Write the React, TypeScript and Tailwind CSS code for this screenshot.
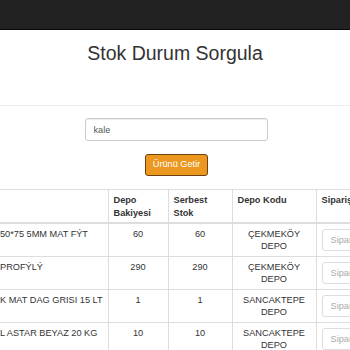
import { useState } from 'react';

const ROWS = [
  { name: '50*75 5MM MAT FÝT', bakiye: 60, serbest: 60, depo: ['ÇEKMEKÖY', 'DEPO'] },
  { name: 'PROFÝLÝ', bakiye: 290, serbest: 290, depo: ['ÇEKMEKÖY', 'DEPO'] },
  { name: 'K MAT DAG GRISI 15 LT', bakiye: 1, serbest: 1, depo: ['SANCAKTEPE', 'DEPO'] },
  { name: 'L ASTAR BEYAZ 20 KG', bakiye: 10, serbest: 10, depo: ['SANCAKTEPE', 'DEPO'] },
];

export default function App() {
  const [query, setQuery] = useState('kale');

  const th = "border border-[#ddd] border-b-2 px-[5px] pt-[4px] pb-[2px] text-left align-top font-bold leading-[13px]";
  const td = "border border-[#ddd] px-[5px] pt-[4px] pb-[4px] align-top leading-[12px]";

  return (
    <div className="w-[350px] h-[350px] overflow-hidden bg-white text-[#333] text-[9.2px]" style={{ fontFamily: '"Liberation Sans", Arial, sans-serif' }}>
      <div className="h-[30px] bg-[#222] border-b border-[#080808]" />

      <h2 className="mt-[12px] text-center text-[19.5px] leading-[22px] text-[#333]">Stok Durum Sorgula</h2>

      <div className="mt-[41px] border-t border-[#eee]" />

      <div className="mt-[12px] flex justify-center">
        <input
          className="ml-[2px] w-[183px] h-[23px] rounded-[3px] border border-[#ccc] px-[8px] text-[9.2px] text-[#555] shadow-[inset_0_1px_1px_rgba(0,0,0,0.075)] outline-none"
          value={query}
          onChange={e => setQuery(e.target.value)}
        />
      </div>

      <div className="mt-[13px] flex justify-center">
        <button className="ml-[3px] w-[63px] h-[22px] rounded-[3px] border border-[#6b4210] bg-[#ec971f] text-white text-[9.2px] leading-none">
          Ürünü Getir
        </button>
      </div>

      <div className="mt-[13px] ml-[-5px]">
        <table className="border-collapse table-fixed w-[480px]">
          <colgroup>
            <col className="w-[113px]" />
            <col className="w-[60px]" />
            <col className="w-[64px]" />
            <col className="w-[84px]" />
            <col className="w-[159px]" />
          </colgroup>
          <thead>
            <tr className="h-[32px]">
              <th className={`${th} border-l-0`}></th>
              <th className={th}>Depo<br />Bakiyesi</th>
              <th className={th}>Serbest<br />Stok</th>
              <th className={th}>Depo Kodu</th>
              <th className={th}>Sipariş</th>
            </tr>
          </thead>
          <tbody>
            {ROWS.map((r, i) => (
              <tr key={i} className="h-[33px]">
                <td className={`${td} border-l-0 whitespace-nowrap`}>{r.name}</td>
                <td className={`${td} text-center`}>{r.bakiye}</td>
                <td className={`${td} text-center`}>{r.serbest}</td>
                <td className={`${td} text-center`}>{r.depo[0]}<br />{r.depo[1]}</td>
                <td className="border border-[#ddd] px-[5px] pt-[5px] pb-[3px] align-top">
                  <input
                    className="block w-[120px] h-[22px] rounded-[3px] border border-[#ddd] px-[8px] text-[9.2px] placeholder-[#aaa] outline-none"
                    placeholder="Sipariş Adedi"
                  />
                </td>
              </tr>
            ))}
          </tbody>
        </table>
      </div>
    </div>
  );
}
